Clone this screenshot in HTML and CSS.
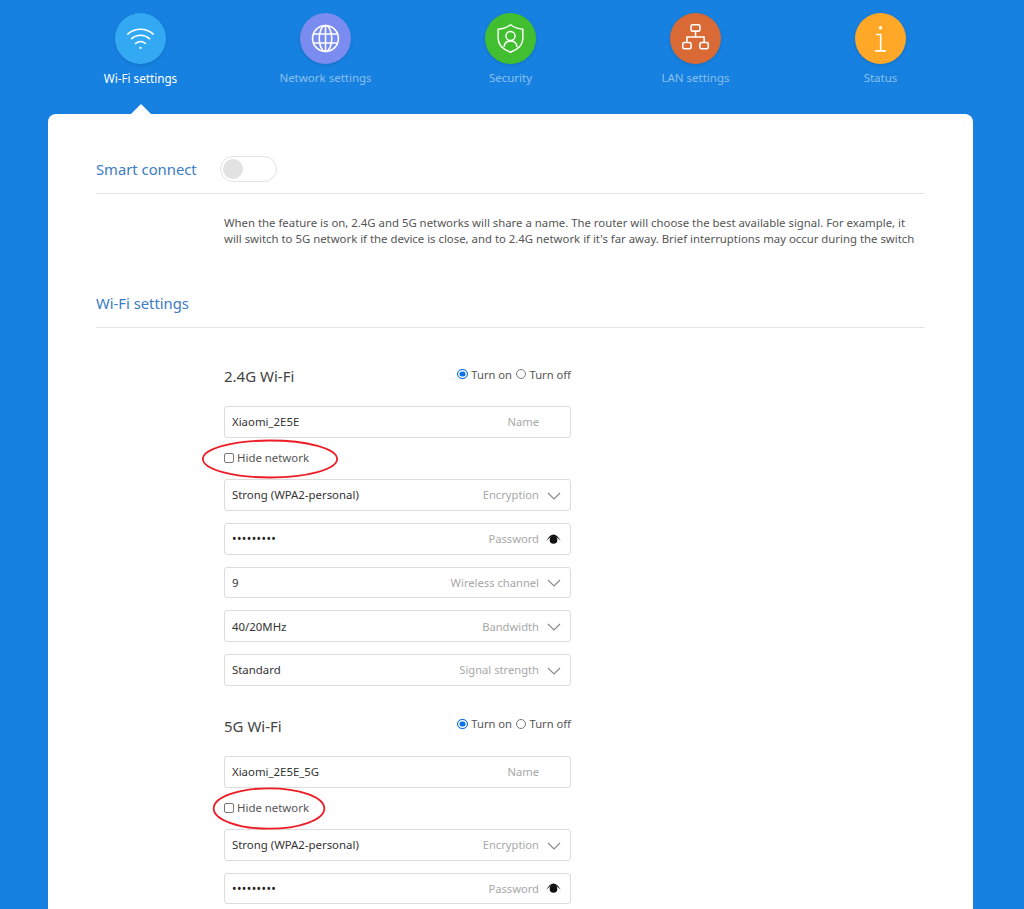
FILE: index.html
```html
<!DOCTYPE html>
<html lang="en">
<head>
<meta charset="utf-8">
<title>Wi-Fi settings</title>
<link rel="stylesheet" href="styles.css">
</head>
<body>
<div class="page">
  <nav class="nav">
    <div class="nav-item active">
      <span class="nav-icon c-wifi">
        <svg viewBox="0 0 52 52" width="51" height="51" fill="none" stroke="#fff" stroke-width="1.6" stroke-linecap="round"><path d="M13 21.500C20.500 15 31.500 15 39 21.500"/><path d="M16.800 26.200C22.300 21.600 29.700 21.600 35.200 26.200"/><path d="M21 31C24 28.700 28 28.700 31 31"/><circle cx="26" cy="35.500" r="1.200" fill="#fff" stroke="none"/></svg>
      </span>
      <span class="nav-label">Wi-Fi settings</span>
    </div>
    <div class="nav-item">
      <span class="nav-icon c-net">
        <svg viewBox="0 0 52 52" width="51" height="51" fill="none" stroke="#fff" stroke-width="1.6"><circle cx="26" cy="26" r="13.200"/><ellipse cx="26" cy="26" rx="6.400" ry="13.200"/><path d="M26 12.800V39.200M13.600 21.500H38.400M13.600 30.500H38.400"/></svg>
      </span>
      <span class="nav-label">Network settings</span>
    </div>
    <div class="nav-item">
      <span class="nav-icon c-sec">
        <svg viewBox="0 0 52 52" width="51" height="51" fill="none" stroke="#fff" stroke-width="1.5" stroke-linecap="round" stroke-linejoin="round"><path d="M26 12C30 15 34 16.200 38.600 16.500V26C38.600 33 33 37.400 26 40C19 37.400 13.400 33 13.400 26V16.500C18 16.200 22 15 26 12Z"/><circle cx="26" cy="23.500" r="4.600"/><path d="M19.500 34C20 30.400 22.400 28.600 26 28.600C29.600 28.600 32 30.400 32.500 34"/></svg>
      </span>
      <span class="nav-label">Security</span>
    </div>
    <div class="nav-item">
      <span class="nav-icon c-lan">
        <svg viewBox="0 0 52 52" width="51" height="51" fill="none" stroke="#fff" stroke-width="1.6" stroke-linejoin="round"><rect x="21.500" y="12" width="9" height="6.500" rx="1.500"/><rect x="13" y="30" width="8.500" height="6.500" rx="1.500"/><rect x="30.500" y="30" width="8.500" height="6.500" rx="1.500"/><path d="M26 18.500V24M17.200 30V24.500H34.800V30"/></svg>
      </span>
      <span class="nav-label">LAN settings</span>
    </div>
    <div class="nav-item">
      <span class="nav-icon c-status">
        <svg viewBox="0 0 52 52" width="51" height="51" fill="none" stroke="#fff" stroke-width="1.6"><circle cx="26" cy="15" r="1.700" fill="#fff" stroke="none"/><path d="M21.500 22H26.200V37.800M20.500 38.600H31.500"/></svg>
      </span>
      <span class="nav-label">Status</span>
    </div>
  </nav>

  <main class="card">
    <section class="head-row smart">
      <h2 class="section-title">Smart connect</h2>
      <span class="toggle"><span class="knob"></span></span>
    </section>
    <p class="desc">When the feature is on, 2.4G and 5G networks will share a name. The router will choose the best available signal. For example, it will switch to 5G network if the device is close, and to 2.4G network if it's far away. Brief interruptions may occur during the switch</p>

    <section class="head-row wifi-head">
      <h2 class="section-title">Wi-Fi settings</h2>
    </section>

    <form class="band band-24">
      <div class="band-head">
        <h3 class="band-title">2.4G Wi-Fi</h3>
        <div class="radios">
          <span class="radio on"></span><span class="radio-text">Turn on</span>
          <span class="radio"></span><span class="radio-text">Turn off</span>
        </div>
      </div>
      <div class="field"><span class="value">Xiaomi_2E5E</span><span class="label label-name">Name</span></div>
      <div class="hide-row"><span class="check"></span><span>Hide network</span><svg class="ring ring-a" viewBox="0 0 138 40" width="138" height="40" fill="none"><ellipse cx="69" cy="20" rx="67.100" ry="18.500" stroke="#ee1c25" stroke-width="1.800"/></svg></div>
      <div class="field"><span class="value">Strong (WPA2-personal)</span><span class="label">Encryption</span><svg class="chev" viewBox="0 0 14 8" width="14" height="8" fill="none" stroke="#8a8a8a" stroke-width="1.200"><path d="M1 1L7 7L13 1"/></svg></div>
      <div class="field"><span class="value dots">•••••••••</span><span class="label">Password</span><svg class="eye" viewBox="0 0 16 11" width="15" height="10"><path d="M0 8C2.500 3 5 .5 8 .5S13.500 3 16 8C13.500 4.500 11 2.800 8 2.800S2.500 4.500 0 8Z" fill="#111"/><circle cx="8" cy="6.500" r="4.200" fill="#111"/></svg></div>
      <div class="field"><span class="value">9</span><span class="label">Wireless channel</span><svg class="chev" viewBox="0 0 14 8" width="14" height="8" fill="none" stroke="#8a8a8a" stroke-width="1.200"><path d="M1 1L7 7L13 1"/></svg></div>
      <div class="field"><span class="value">40/20MHz</span><span class="label">Bandwidth</span><svg class="chev" viewBox="0 0 14 8" width="14" height="8" fill="none" stroke="#8a8a8a" stroke-width="1.200"><path d="M1 1L7 7L13 1"/></svg></div>
      <div class="field"><span class="value">Standard</span><span class="label">Signal strength</span><svg class="chev" viewBox="0 0 14 8" width="14" height="8" fill="none" stroke="#8a8a8a" stroke-width="1.200"><path d="M1 1L7 7L13 1"/></svg></div>
    </form>

    <form class="band band-5">
      <div class="band-head">
        <h3 class="band-title">5G Wi-Fi</h3>
        <div class="radios">
          <span class="radio on"></span><span class="radio-text">Turn on</span>
          <span class="radio"></span><span class="radio-text">Turn off</span>
        </div>
      </div>
      <div class="field"><span class="value">Xiaomi_2E5E_5G</span><span class="label label-name">Name</span></div>
      <div class="hide-row"><span class="check"></span><span>Hide network</span><svg class="ring ring-b" viewBox="0 0 114 43" width="114" height="43" fill="none"><ellipse cx="57" cy="21.500" rx="55.300" ry="20.200" stroke="#ee1c25" stroke-width="1.800"/></svg></div>
      <div class="field"><span class="value">Strong (WPA2-personal)</span><span class="label">Encryption</span><svg class="chev" viewBox="0 0 14 8" width="14" height="8" fill="none" stroke="#8a8a8a" stroke-width="1.200"><path d="M1 1L7 7L13 1"/></svg></div>
      <div class="field"><span class="value dots">•••••••••</span><span class="label">Password</span><svg class="eye" viewBox="0 0 16 11" width="15" height="10"><path d="M0 8C2.500 3 5 .5 8 .5S13.500 3 16 8C13.500 4.500 11 2.800 8 2.800S2.500 4.500 0 8Z" fill="#111"/><circle cx="8" cy="6.500" r="4.200" fill="#111"/></svg></div>
    </form>
  </main>
</div>
</body>
</html>
```

FILE: styles.css
```css
* { box-sizing: border-box; }
html, body { margin: 0; height: 909px; overflow: hidden; }
body { background: #1681e0; font-family: "Noto Sans", "Open Sans", sans-serif; font-size: 11.4px; color: #444; }
.page { width: 925px; margin-left: 48px; }

.nav { display: flex; height: 114px; padding-top: 13px; }
.nav-item { position: relative; width: 185px; display: flex; flex-direction: column; align-items: center; }
.nav-icon { width: 51px; height: 51px; border-radius: 50%; display: block; box-shadow: 0 1px 3px rgba(0,0,0,.15); }
.nav-icon svg { display: block; }
.c-wifi { background: #33a9f4; }
.c-net { background: #7b8cf0; }
.c-sec { background: #42bf30; }
.c-lan { background: #d96a36; }
.c-status { background: #ffa726; }
.nav-label { margin-top: 5px; font-size: 11.5px; line-height: 18px; color: rgba(255,255,255,.5); }
.active .nav-label { font-size: 11.7px; color: #fff; }
.active::after { content: ""; position: absolute; left: 83px; top: 91px; border: 10px solid transparent; border-top: 0; border-bottom-color: #fff; }

.card { height: 900px; background: #fff; border-radius: 8px 8px 0 0; padding: 0 48px; }
.head-row { display: flex; align-items: center; border-bottom: 1px solid #e5e5e5; }
.smart { height: 80px; padding-top: 31px; gap: 23px; }
.section-title { margin: 0; font-size: 14.800px; font-weight: 400; color: #3b7cc4; line-height: 20px; }
.toggle { width: 57px; height: 26px; border: 1px solid #e3e3e3; border-radius: 13px; padding: 2px; display: block; }
.knob { display: block; width: 20px; height: 20px; border-radius: 50%; background: #e2e2e2; }
.desc { margin: 21px 0 0 128px; font-size: 11.37px; line-height: 16px; color: #555; }
.wifi-head { height: 81px; padding-top: 32px; }

.band { margin-left: 128px; width: 347px; }
.band-24 { margin-top: 20px; }
.band-head { height: 58px; padding-top: 16px; display: flex; justify-content: space-between; align-items: flex-start; }
.band-title { margin: 0; font-size: 15px; font-weight: 400; line-height: 24px; color: #444; }
.radios { display: flex; align-items: center; height: 20px; color: #555; font-size: 11.2px; }
.radio { width: 10.500px; height: 10.500px; border: 1px solid #777; border-radius: 50%; background: #fff; margin-right: 3.500px; }
.radio.on { border: 1.500px solid #0a6fe8; background: #0a6fe8; box-shadow: inset 0 0 0 1.500px #fff; }
.radio-text { margin-right: 3.500px; }
.radio-text:last-child { margin-right: 0; }

.field { height: 31.750px; margin-bottom: 12px; border: 1px solid #dcdcdc; border-radius: 3px; padding: 0 8px 0 7px; display: flex; align-items: center; }
.value { color: #333; flex: 1; }
.dots { letter-spacing: .4px; font-size: 12px; color: #222; }
.label { color: #a8a8a8; font-size: 11.2px; }
.label-name { margin-right: 23px; }
.chev { margin: 2px 1px 0 8px; }
.eye { margin: 0 1px 0 7px; }

.hide-row { position: relative; display: flex; align-items: center; height: 41.250px; margin-top: -12px; padding-bottom: 1px; color: #555; gap: 3px; }
.check { width: 10px; height: 10px; border: 1px solid #777; border-radius: 2px; display: block; }
.ring { position: absolute; }
.ring-a { left: -23px; top: 1px; }
.ring-b { left: -12px; top: -1px; }
```
